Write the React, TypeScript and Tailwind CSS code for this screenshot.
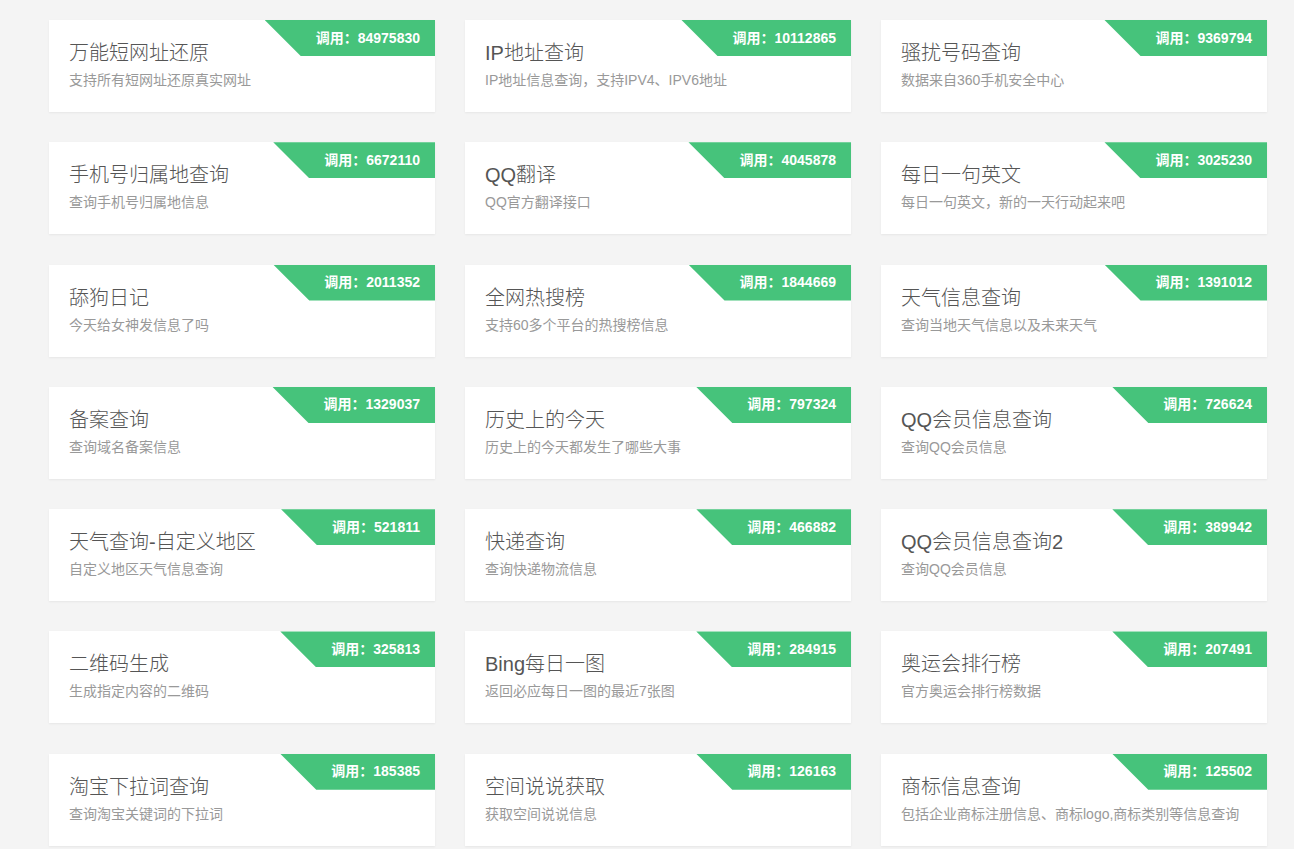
const apis = [
  { title: "万能短网址还原", desc: "支持所有短网址还原真实网址", count: 84975830 },
  { title: "IP地址查询", desc: "IP地址信息查询，支持IPV4、IPV6地址", count: 10112865 },
  { title: "骚扰号码查询", desc: "数据来自360手机安全中心", count: 9369794 },
  { title: "手机号归属地查询", desc: "查询手机号归属地信息", count: 6672110 },
  { title: "QQ翻译", desc: "QQ官方翻译接口", count: 4045878 },
  { title: "每日一句英文", desc: "每日一句英文，新的一天行动起来吧", count: 3025230 },
  { title: "舔狗日记", desc: "今天给女神发信息了吗", count: 2011352 },
  { title: "全网热搜榜", desc: "支持60多个平台的热搜榜信息", count: 1844669 },
  { title: "天气信息查询", desc: "查询当地天气信息以及未来天气", count: 1391012 },
  { title: "备案查询", desc: "查询域名备案信息", count: 1329037 },
  { title: "历史上的今天", desc: "历史上的今天都发生了哪些大事", count: 797324 },
  { title: "QQ会员信息查询", desc: "查询QQ会员信息", count: 726624 },
  { title: "天气查询-自定义地区", desc: "自定义地区天气信息查询", count: 521811 },
  { title: "快递查询", desc: "查询快递物流信息", count: 466882 },
  { title: "QQ会员信息查询2", desc: "查询QQ会员信息", count: 389942 },
  { title: "二维码生成", desc: "生成指定内容的二维码", count: 325813 },
  { title: "Bing每日一图", desc: "返回必应每日一图的最近7张图", count: 284915 },
  { title: "奥运会排行榜", desc: "官方奥运会排行榜数据", count: 207491 },
  { title: "淘宝下拉词查询", desc: "查询淘宝关键词的下拉词", count: 185385 },
  { title: "空间说说获取", desc: "获取空间说说信息", count: 126163 },
  { title: "商标信息查询", desc: "包括企业商标注册信息、商标logo,商标类别等信息查询", count: 125502 },
];

function ApiCard({ title, desc, count }: { title: string; desc: string; count: number }) {
  return (
    <div className="relative h-[92px] overflow-hidden bg-white px-5 pt-[19px] shadow-[0_1px_2px_rgba(0,0,0,0.06)]">
      <div className="absolute right-0 top-0 flex h-9 items-center bg-[#46c37b] pl-[51px] pr-[15px] text-[14px] font-bold text-white [clip-path:polygon(0_0,100%_0,100%_100%,36px_100%)]">
        调用：{count}
      </div>
      <div className="text-[20px] font-light leading-[28px] text-[#555]">{title}</div>
      <div className="mt-[3px] text-[14px] leading-5 text-[#999]">{desc}</div>
    </div>
  );
}

export default function App() {
  return (
    <div className="min-h-screen bg-[#f4f4f4] pt-5 pb-8 font-['Liberation_Sans','Noto_Sans_CJK_SC',sans-serif]">
      <div className="ml-[49px] grid w-[1218px] grid-cols-3 gap-x-[30px] gap-y-[30.3px]">
        {apis.map((a) => (
          <ApiCard key={a.title} {...a} />
        ))}
      </div>
    </div>
  );
}
